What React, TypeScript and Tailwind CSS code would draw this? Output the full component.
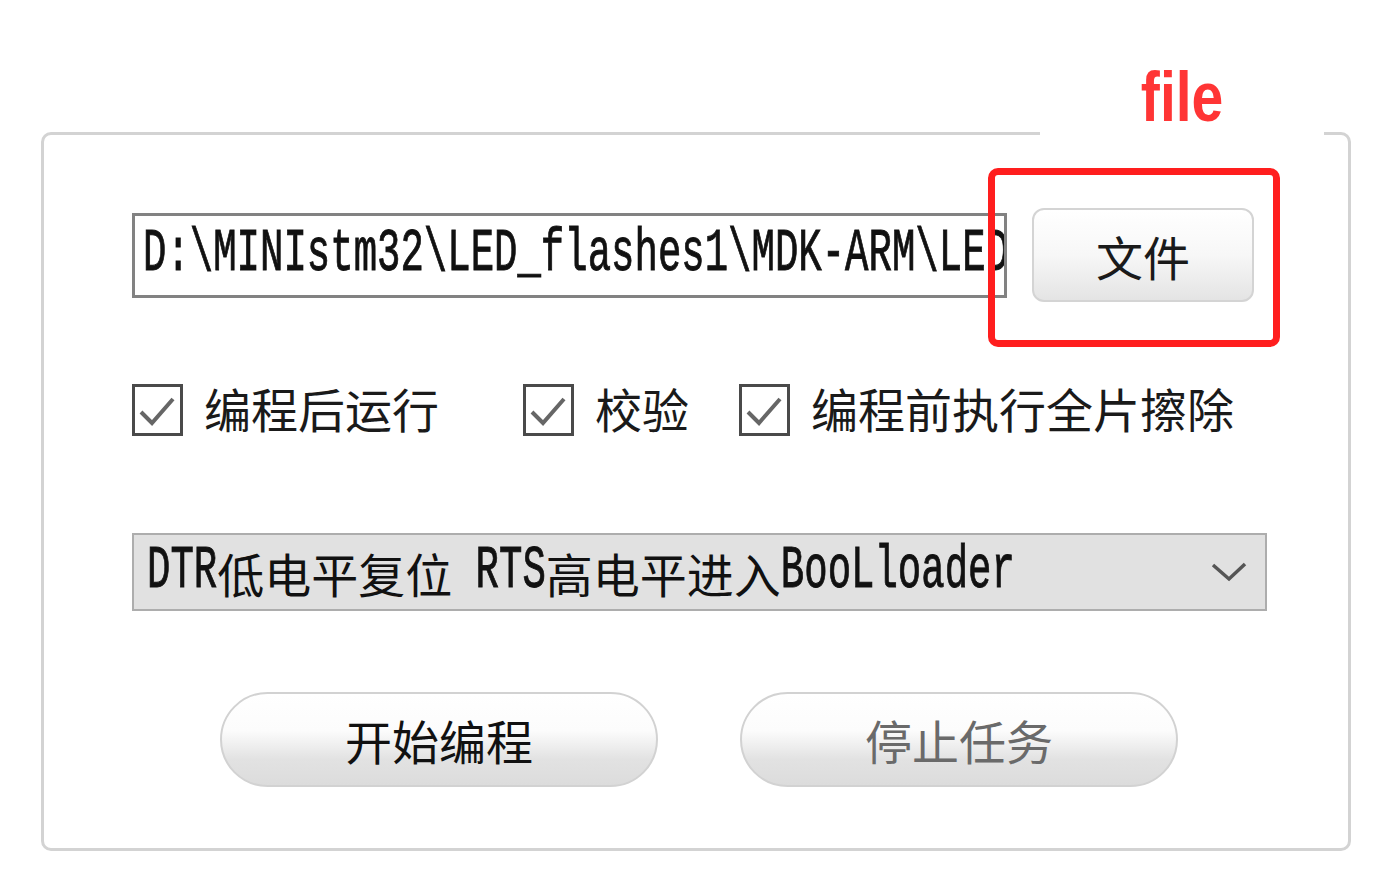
import React from "react";

const cjk = "font-['Noto_Sans_CJK_SC',sans-serif]";
const mono = "inline-block font-['Liberation_Mono','Noto_Sans_CJK_SC',monospace] text-[39px] font-normal scale-y-[1.55] text-[#111] [-webkit-text-stroke:0.6px_#111]";

const CheckBox = ({ label, className = "" }: { label: string; className?: string }) => (
  <div className={`flex items-center ${className}`}>
    <div className="w-[51px] h-[52px] border-[3px] border-[#4a4a4a] bg-white shrink-0">
      <svg width="45" height="46" viewBox="0 0 45 46">
        <path d="M6 25 L17 36 L38 12" fill="none" stroke="#666" strokeWidth="4" />
      </svg>
    </div>
    <span className={`ml-[21px] -mt-[6px] text-[47px] leading-none text-[#1a1a1a] ${cjk}`}>{label}</span>
  </div>
);

const PillButton = ({ label, muted }: { label: string; muted?: boolean }) => (
  <button
    className={`w-[438px] h-[95px] rounded-full border-2 border-[#d2d2d2] bg-[linear-gradient(to_bottom,#ffffff_0%,#fcfcfc_40%,#e2e2e2_72%,#dcdcdc_100%)] text-[47px] leading-none ${cjk} ${
      muted ? "text-[#6a6a6a]" : "text-[#111]"
    }`}
  >
    {label}
  </button>
);

export default function App() {
  return (
    <div className="relative w-[1392px] h-[896px] bg-white overflow-hidden">
      {/* annotation label covering the top border */}
      <div className="absolute left-[1040px] top-[56px] w-[284px] h-[84px] bg-white flex justify-center">
        <span className="inline-block text-[#ff3535] text-[68px] leading-none font-bold font-['Liberation_Sans',sans-serif] scale-x-[0.84] scale-y-[1.04] mt-[6px]">
          file
        </span>
      </div>

      <div className="ml-[41px] mt-[132px] w-[1310px] h-[719px] border-[3px] border-[#d3d3d3] rounded-[10px] pl-[88px] pt-[73px]">
        {/* path + file button */}
        <div className="flex items-center">
          <div className="w-[875px] h-[85px] border-[3px] border-[#828282] bg-white overflow-hidden whitespace-nowrap flex items-center pl-[8px]">
            <span className={mono}>D:\MINIstm32\LED_flashes1\MDK-ARM\LED_flashes1.hex</span>
          </div>
          <div className="relative ml-[25px]">
            <button
              className={`w-[222px] h-[94px] rounded-[12px] border-2 border-[#d4d4d4] bg-[linear-gradient(to_bottom,#ffffff_0%,#f7f7f7_50%,#e4e4e4_100%)] text-[47px] leading-none text-[#1a1a1a] ${cjk}`}
            >
              文件
            </button>
            <div className="absolute left-[-44px] top-[-40px] w-[292px] h-[179px] border-[7px] border-[#ff1e1e] rounded-[10px] pointer-events-none" />
          </div>
        </div>

        {/* options */}
        <div className="flex items-center mt-[82px]">
          <CheckBox label="编程后运行" />
          <CheckBox label="校验" className="ml-[84px]" />
          <CheckBox label="编程前执行全片擦除" className="ml-[50px]" />
        </div>

        {/* reset mode select */}
        <div className="mt-[97px] w-[1135px] h-[78px] bg-[#e1e1e1] border-2 border-[#adadad] flex items-center pl-[13px] pr-[18px] whitespace-nowrap">
          <span className={mono}>DTR</span>
          <span className={`text-[47px] leading-none text-[#111] ${cjk}`}>低电平复位</span>
          <span className={mono}>&nbsp;RTS</span>
          <span className={`text-[47px] leading-none text-[#111] ${cjk}`}>高电平进入</span>
          <span className={mono}>BooLloader</span>
          <svg className="ml-auto" width="36" height="20" viewBox="0 0 36 20">
            <path d="M2 3 L18 17 L34 2" fill="none" stroke="#555" strokeWidth="3.5" />
          </svg>
        </div>

        {/* actions */}
        <div className="flex mt-[81px] ml-[88px] gap-[82px]">
          <PillButton label="开始编程" />
          <PillButton label="停止任务" muted />
        </div>
      </div>
    </div>
  );
}
